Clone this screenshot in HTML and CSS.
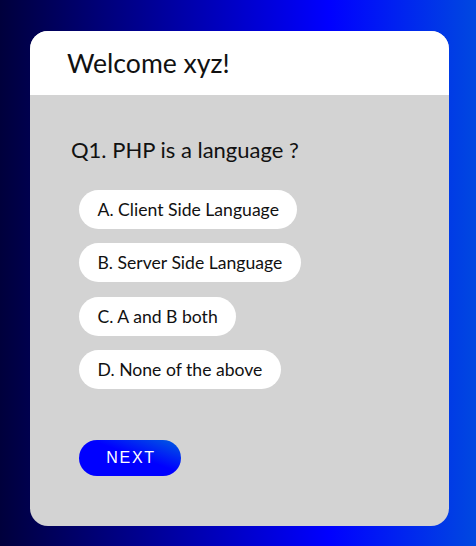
FILE: index.html
```html
<!DOCTYPE html>
<html>
<head>
<meta charset="utf-8">
<link rel="stylesheet" href="styles.css">
</head>
<body>
<div class="card">
  <div class="card-head"><h2 class="welcome">Welcome xyz!</h2></div>
  <div class="card-body">
    <p class="question">Q1. PHP is a language ?</p>
    <div class="options">
      <button class="option">A. Client Side Language</button>
      <button class="option">B. Server Side Language</button>
      <button class="option">C. A and B both</button>
      <button class="option">D. None of the above</button>
    </div>
    <button class="next">NEXT</button>
  </div>
</div>
</body>
</html>
```
FILE: styles.css
```css
html, body {
  margin: 0;
  padding: 0;
}
body {
  width: 476px;
  height: 546px;
  overflow: hidden;
  background: linear-gradient(to right, #00003c 0%, #0000ff 69%, #0048e0 100%);
  font-family: Lato, "Noto Sans", sans-serif;
  padding-top: 31px;
  box-sizing: border-box;
}
.card {
  margin-left: 30px;
  width: 419px;
  height: 495px;
  border-radius: 18px;
  overflow: hidden;
  background: #d3d3d3;
  display: flex;
  flex-direction: column;
}
.card-head {
  height: 64px;
  background: #fff;
  display: flex;
  align-items: center;
  padding-left: 37px;
}
.welcome {
  margin: 0;
  font-weight: 400;
  font-size: 26.6px;
  color: #111;
}
.card-body {
  padding: 40px 0 0 41px;
}
.question {
  margin: 0;
  font-size: 22px;
  line-height: 30px;
  color: #111;
}
.options {
  display: flex;
  flex-direction: column;
  align-items: flex-start;
  gap: 14.4px;
  margin: 25px 0 0 8px;
}
.option {
  border: none;
  background: #fff;
  border-radius: 20px;
  height: 39px;
  padding: 0 18.5px;
  font-family: Lato, "Noto Sans", sans-serif;
  font-size: 17.6px;
  color: #111;
}
.next {
  margin: 51px 0 0 8px;
  width: 102px;
  height: 36px;
  border: none;
  border-radius: 18px;
  background: linear-gradient(20deg, #0000ff 55%, #0060e0 100%);
  color: #fff;
  font-family: "Liberation Sans", Arial, sans-serif;
  font-size: 16px;
  letter-spacing: 1.7px;
  padding: 0 0 0 2px;
}
```
